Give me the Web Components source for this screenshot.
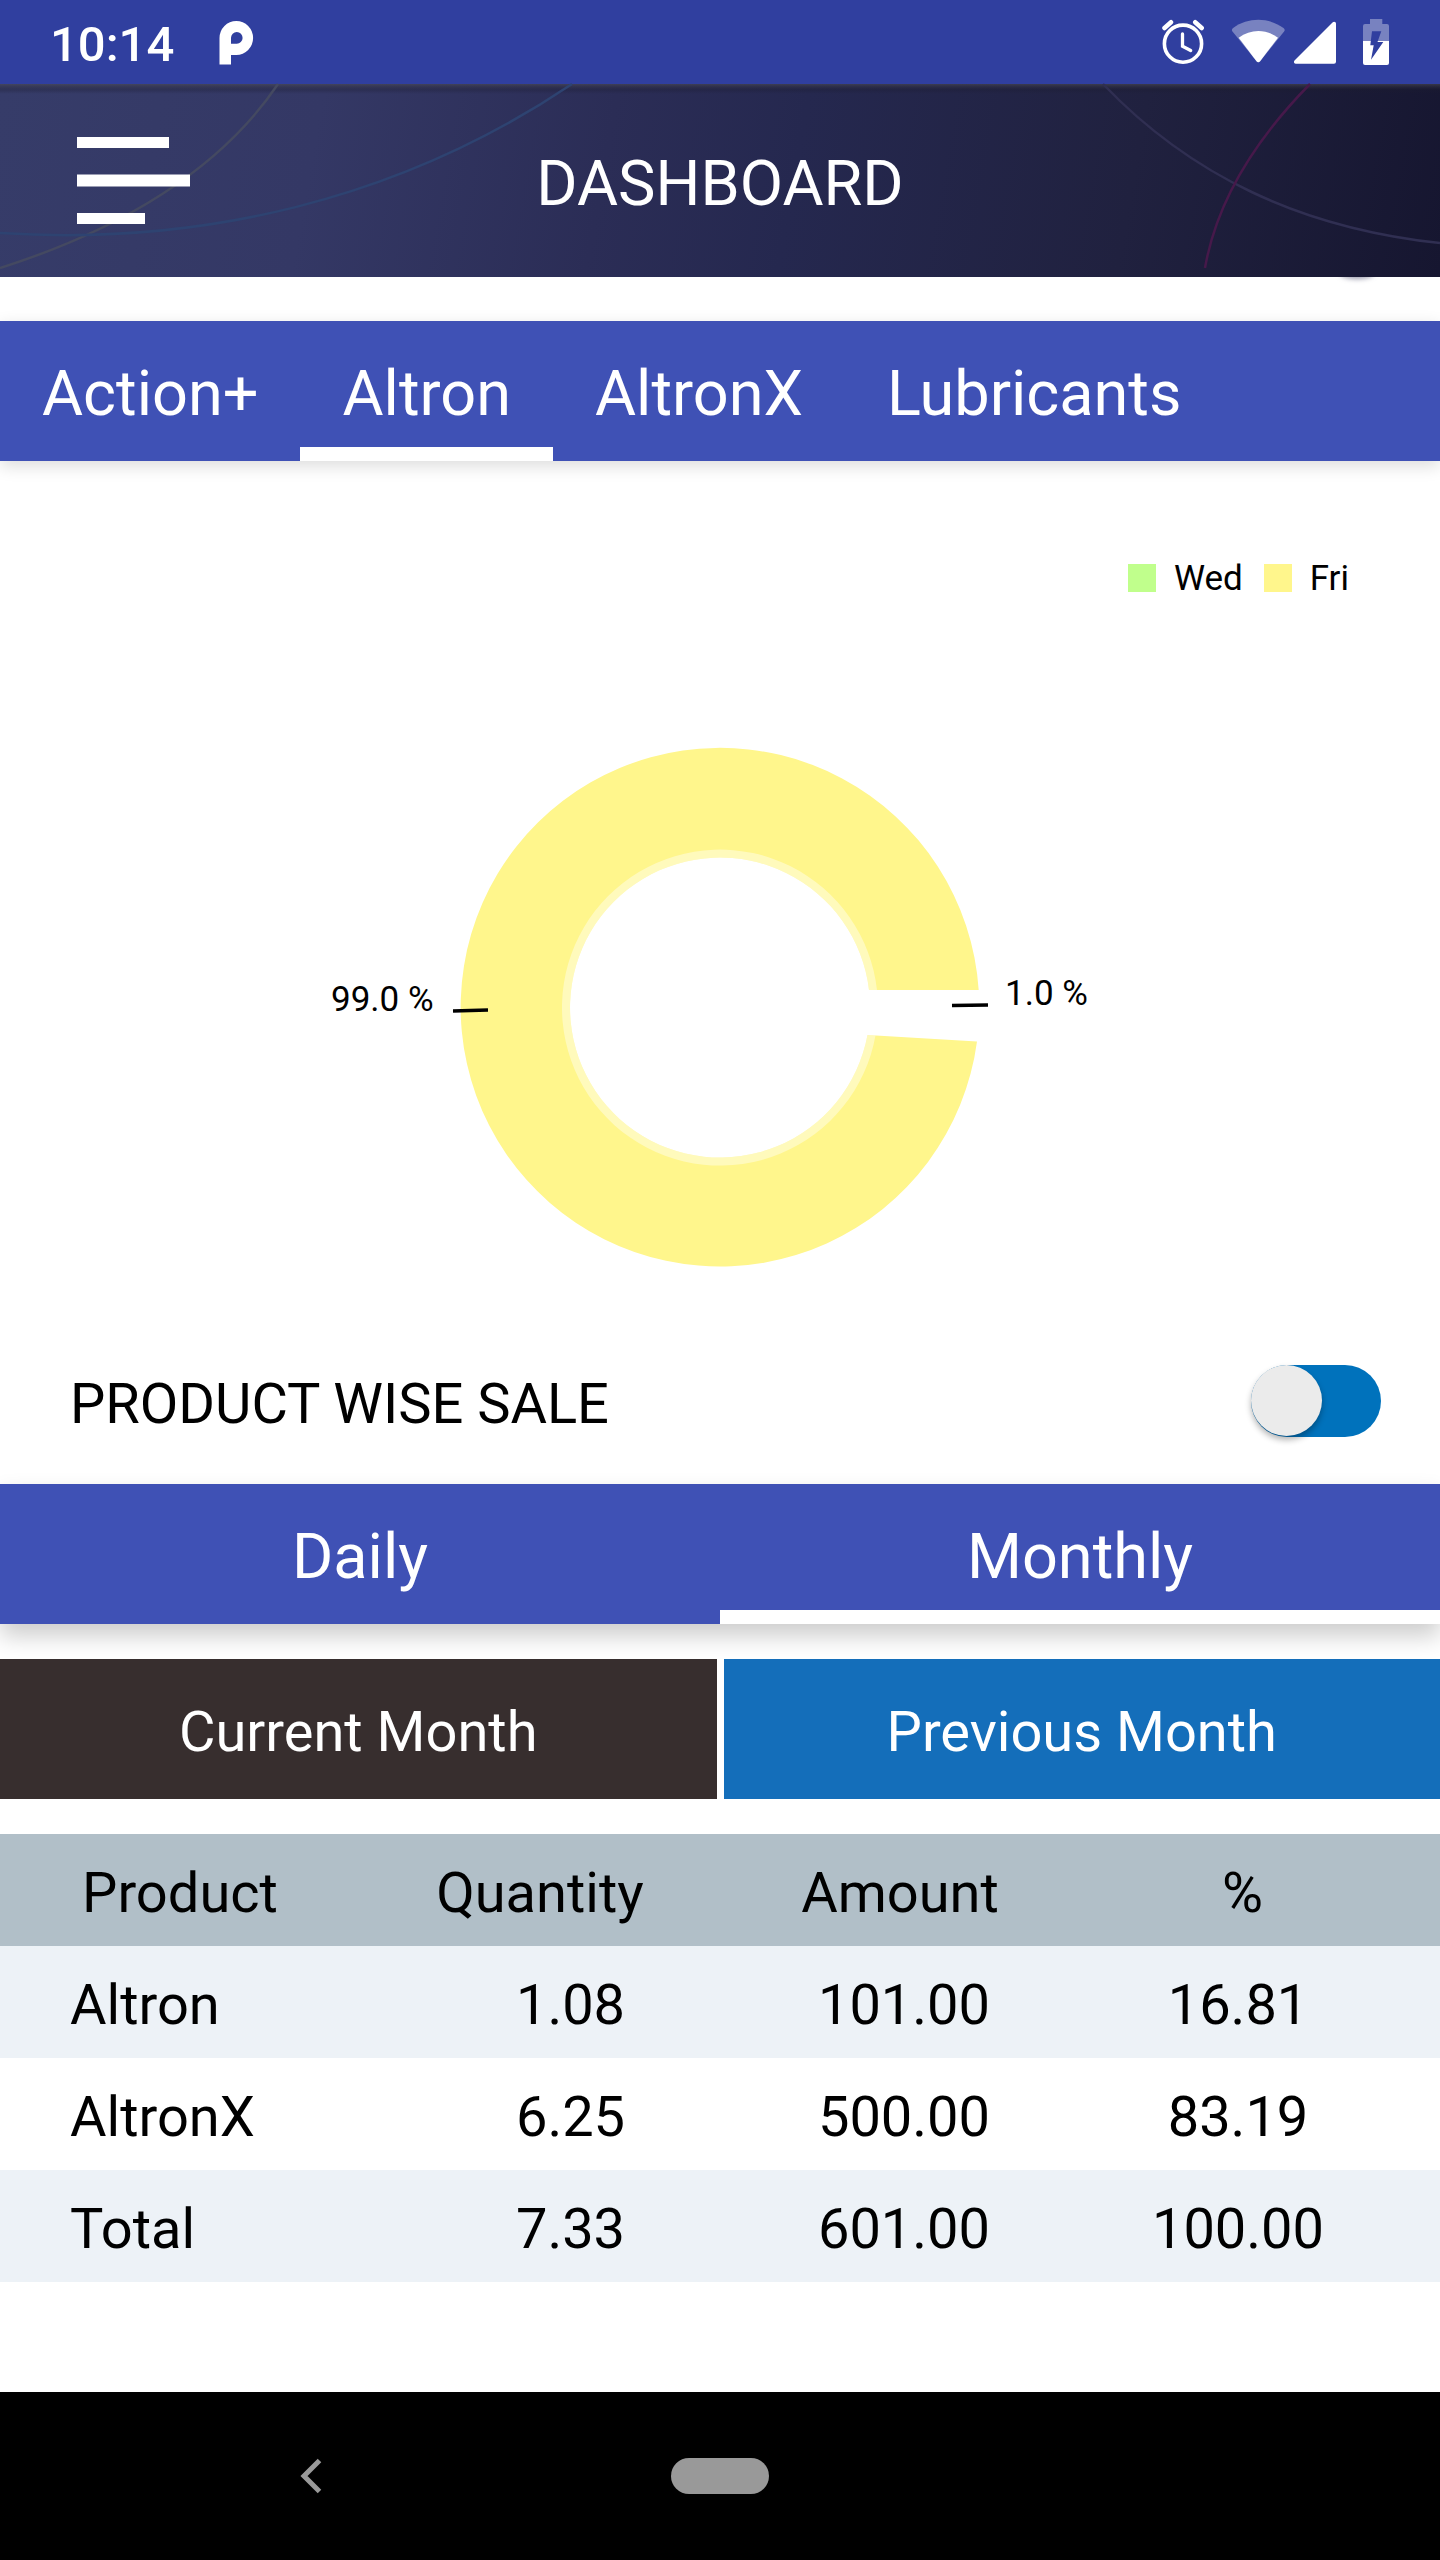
<!DOCTYPE html>
<html lang="en">
<head>
<meta charset="utf-8">
<meta name="viewport" content="width=device-width, initial-scale=1">
<title>Dashboard</title>
<style>
  body { margin: 0; background: #fff; color: #000; font-family: Roboto, "Noto Sans", sans-serif; }
</style>
</head>
<body>
<dashboard-app></dashboard-app>
<script>
const define = (name, html, setup) => {
  const template = document.createElement('template');
  template.innerHTML = html;
  customElements.define(name, class extends HTMLElement {
    constructor() {
      super();
      this.attachShadow({ mode: 'open' }).append(template.content.cloneNode(true));
    }
    connectedCallback() { if (setup) setup(this, this.shadowRoot); }
  });
};

define('status-bar', `
<style>
  :host { display: flex; align-items: center; justify-content: space-between; height: 84px; padding: 0 48px 0 50px; background: #303f9f; color: #fff; }
  .left { display: flex; align-items: center; gap: 44px; }
  time { font-size: 49px; line-height: 58px; font-weight: 500; padding-top: 6px; }
  svg { display: block; }
</style>
<div class="left">
  <time>10:14</time>
  <svg width="36" height="84" viewBox="219 0 36 84" fill="#fff" fill-rule="evenodd" aria-hidden="true"><path d="M220.500 64.500V38a16.800 17 0 1 1 16.800 17H232V64.500zM232 43.700h5.700a5.800 5.800 0 1 0-5.700-5.800z"/></svg>
</div>
<svg width="230" height="84" viewBox="1162 0 230 84" fill="#fff" aria-hidden="true">
  <g fill="none" stroke="#fff" stroke-width="3.600" stroke-linecap="round">
    <circle cx="1183" cy="43.700" r="18.600"/>
    <path d="M1182.500 34v12.200l8.200 4.300" stroke-width="3.300"/>
    <path d="M1164.500 28l6.500-5.800M1201.700 28l-6.500-5.800" stroke-width="4.500"/>
  </g>
  <path opacity=".35" d="M1232.500 31.500c-1-1.300-.7-2.600.6-3.600 15-10.800 35.400-10.800 50.400 0 1.300 1 1.600 2.300.6 3.600l-24 29.800c-1 1.200-2.600 1.200-3.600 0z"/>
  <path d="M1238.700 37.700c11.800-9 27.500-9 39.300 0l-17.900 23.600c-1 1.200-2.600 1.200-3.600 0z"/>
  <path d="M1296 63.700h38a2 2 0 0 0 2-2V23.800c0-1.900-2.100-2.600-3.500-1.200l-38 37.800c-1.200 1.400-.4 3.300 1.500 3.300z"/>
  <mask id="bolt"><path fill="#fff" d="M1360 0h32v84h-32z"/><path fill="#000" d="M1372 31.300h9.300L1377.500 42h5.800l-12.300 17.700 2.700-14.400h-3.400z"/></mask>
  <g mask="url(#bolt)"><path opacity=".35" d="M1370 24v-5h12.300v5h4.700a2 2 0 0 1 2 2v15h-26V26a2 2 0 0 1 2-2z"/><path d="M1363 41h26v22a2 2 0 0 1-2 2h-22a2 2 0 0 1-2-2z"/></g>
</svg>`);

define('app-header', `
<style>
  :host { display: grid; grid-template-columns: 1fr auto 1fr; align-items: center; height: 193px; color: #fff;
    background: linear-gradient(100deg, #363c69 0%, #343865 22%, #2b2d56 42%, #25284f 55%, #20213f 78%, #161630 100%); position: relative; z-index: 1; }
  .lines { grid-area: 1 / 1 / 2 / 4; width: 100%; height: 193px; overflow: visible; }
  button { grid-area: 1 / 1; justify-self: start; z-index: 1; background: none; border: 0; margin: 0 0 0 56px; padding: 21px; display: block; color: inherit; }
  button svg { display: block; }
  h1 { grid-area: 1 / 2; margin: 0; padding-top: 7px; font-size: 63px; line-height: 74px; font-weight: 400; z-index: 1; }
</style>
<svg class="lines" viewBox="0 84 1440 193" preserveAspectRatio="none" fill="none" stroke-width="2.500" aria-hidden="true">
  <defs>
    <linearGradient id="edge" x1="0" x2="0" y1="0" y2="1"><stop offset="0" stop-color="#4c4c58" stop-opacity=".6"/><stop offset=".6" stop-color="#1c1c30" stop-opacity=".3"/><stop offset="1" stop-color="#1c1c30" stop-opacity="0"/></linearGradient>
    <filter id="soft" x="-50%" y="-100%" width="200%" height="300%"><feGaussianBlur stdDeviation="2.500"/></filter>
    <clipPath id="below"><path d="M1320 277h80v20h-80z"/></clipPath>
  </defs>
  <path d="M0 84H1440V94H0z" fill="url(#edge)"/>
  <path stroke="#444961" d="M0 268C120 230 220 170 278 84"/>
  <path stroke="#2e4371" d="M0 233C200 246 400 200 572 84"/>
  <path stroke="#302f52" d="M1103 84C1190 175 1300 228 1440 243"/>
  <path stroke="#46194a" d="M1310 84C1250 145 1216 205 1205 268"/>
  <g clip-path="url(#below)"><ellipse cx="1357" cy="273" rx="17" ry="6" fill="#9c9cae" filter="url(#soft)"/></g>
</svg>
<button type="button" aria-label="Menu"><svg width="113" height="87" viewBox="0 0 113 87" fill="#fff"><path d="M0 0h92v11H0zM0 37.500h113v12H0zM0 76h68v11H0z"/></svg></button>
<h1><slot></slot></h1>`);

define('tab-bar', `
<style>
  :host { display: flex; height: 140px; background: #3f51b5; box-shadow: 0 5px 16px rgba(0,0,0,.14); }
  :host([fill]) { box-shadow: 0 12px 22px rgba(0,0,0,.2); position: relative; }
</style>
<slot></slot>`, host => host.setAttribute('role', 'tablist'));

define('tab-item', `
<style>
  :host { display: flex; }
  :host([wide]) { flex: 1 1 0; }
  button { flex: 1; display: block; margin: 0; border: 0; padding: 5px 42px 0; background: none; color: #fff; font: inherit; font-size: 63px; line-height: 74px; border-radius: 0; }
  :host([selected]) button { box-shadow: inset 0 -14px #fff; }
</style>
<button type="button" role="tab"><slot></slot></button>`,
(host, root) => root.querySelector('button').setAttribute('aria-selected', host.hasAttribute('selected')));

define('donut-chart', `
<style>
  :host { display: flex; flex-direction: column; padding: 96px 91px 11px; font-size: 35px; line-height: 40px; }
  ul { display: flex; justify-content: flex-end; gap: 21px; list-style: none; margin: 0 0 109px; padding: 0; }
  li { display: flex; align-items: center; gap: 18px; }
  li::before { content: ""; width: 28px; height: 28px; background: var(--swatch); }
  .wed { --swatch: #c0ff8c; }
  .fri { --swatch: #fff68c; }
  span { padding-top: 2px; }
  svg { display: block; align-self: center; width: 800px; height: 600px; max-width: 100%; }
</style>
<ul><li class="wed"><span>Wed</span></li><li class="fri"><span>Fri</span></li></ul>
<svg viewBox="320 707 800 600" role="img" aria-label="Wed 1.0 %, Fri 99.0 %">
  <path fill="#fff68c" d="M869 989H978.700A259.300 259.300 0 1 0 977 1040.400L867.500 1034A150 150 0 1 1 869 989z"/>
  <path fill="#fff" opacity=".42" d="M869 989H877A158 158 0 1 0 875.500 1034.500L867.500 1034A150 150 0 1 1 869 989z"/>
  <path stroke="#000" stroke-width="3.500" d="M453 1010l35-1M952 1004.500l36-.6"/>
  <g font-size="35" fill="#000"><text x="331" y="1010">99.0 %</text><text x="1005" y="1004">1.0 %</text></g>
</svg>`);

define('toggle-row', `
<style>
  :host { box-sizing: border-box; display: flex; align-items: center; justify-content: space-between; height: 165px; padding: 0 59px 2px 70px; }
  label { font-size: 56px; line-height: 66px; padding-top: 6px; }
  input { appearance: none; display: block; box-sizing: border-box; margin: 0; width: 130px; height: 72px; border-radius: 36px; background: #0072bc; }
  input::before { content: ""; display: block; width: 71px; height: 71px; border-radius: 50%; background: #ebebeb; box-shadow: 0 4px 6px rgba(0,0,0,.3); }
</style>
<label for="mode"><slot></slot></label>
<input id="mode" type="checkbox" role="switch">`);

define('month-switch', `
<style>
  :host { display: flex; gap: 7px; padding: 35px 0; }
  button { flex: 1 1 0; height: 140px; margin: 0; border: 0; border-radius: 0; padding: 5px 0 0; color: #fff; background: #146eba; font: inherit; font-size: 56px; line-height: 66px; }
  .current { background: #372e2e; }
</style>
<button class="current" type="button">Current Month</button><button type="button">Previous Month</button>`);

define('sales-table', `
<style>
  :host { display: block; }
  table, thead, tbody { display: block; }
  tr { display: grid; box-sizing: border-box; height: 112px; align-items: center; font-size: 56px; line-height: 66px; }
  th, td { padding: 5px 0 0; font-weight: 400; text-align: center; }
  thead tr { background: #b1bfc8; grid-template-columns: repeat(4, 1fr); }
  thead th:last-child { padding-right: 35px; }
  tbody tr { padding: 0 35px; grid-template-columns: 369fr 333fr 334fr 334fr; }
  tbody tr:nth-child(odd) { background: #edf2f7; }
  tbody th { text-align: left; padding-left: 35px; }
</style>
<table>
  <thead><tr><th scope="col">Product</th><th scope="col">Quantity</th><th scope="col">Amount</th><th scope="col">%</th></tr></thead>
  <tbody>
    <tr><th scope="row">Altron</th><td>1.08</td><td>101.00</td><td>16.81</td></tr>
    <tr><th scope="row">AltronX</th><td>6.25</td><td>500.00</td><td>83.19</td></tr>
    <tr><th scope="row">Total</th><td>7.33</td><td>601.00</td><td>100.00</td></tr>
  </tbody>
</table>`);

define('navigation-bar', `
<style>
  :host { display: grid; grid-template-columns: 1fr auto 1fr; align-items: center; height: 168px; background: #000; }
  button { display: block; margin: 0; border: 0; padding: 0; background: none; }
  .back { justify-self: center; padding-right: 50px; }
  .home { width: 98px; height: 36px; border-radius: 18px; background: #999; }
  svg { display: block; }
</style>
<button class="back" type="button" aria-label="Back"><svg width="24" height="38" viewBox="0 0 24 38" fill="none" stroke="#999" stroke-width="5"><path d="M20.500 3.500L5 19l15.500 15.500"/></svg></button>
<button class="home" type="button" aria-label="Home"></button>`);

define('dashboard-app', `
<style>
  :host { display: flex; flex-direction: column; min-height: 100vh; }
  main { flex: 1; padding-top: 44px; }
</style>
<status-bar></status-bar>
<app-header>DASHBOARD</app-header>
<main>
  <tab-bar>
    <tab-item>Action+</tab-item><tab-item selected>Altron</tab-item><tab-item>AltronX</tab-item><tab-item>Lubricants</tab-item>
  </tab-bar>
  <donut-chart></donut-chart>
  <toggle-row>PRODUCT WISE SALE</toggle-row>
  <tab-bar fill><tab-item wide>Daily</tab-item><tab-item wide selected>Monthly</tab-item></tab-bar>
  <month-switch></month-switch>
  <sales-table></sales-table>
</main>
<navigation-bar></navigation-bar>`);
</script>
</body>
</html>
